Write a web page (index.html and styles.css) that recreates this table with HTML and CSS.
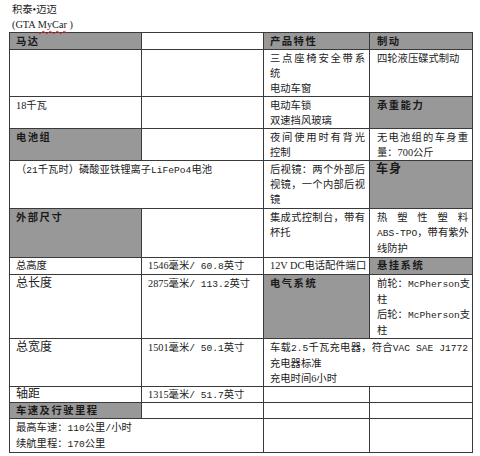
FILE: index.html
```html
<!DOCTYPE html>
<html lang="zh">
<head>
<meta charset="utf-8">
<title>积泰•迈迈</title>
<link rel="stylesheet" href="styles.css">
</head>
<body>
<div class="title">
  <div>积泰•迈迈</div>
  <div>(GTA <span class="spell">MyCar</span> )</div>
</div>
<table class="spec">
  <colgroup><col class="c1"><col class="c2"><col class="c3"><col class="c4"></colgroup>
  <tr class="r1">
    <td class="hd">马达</td><td></td><td class="hd">产品特性</td><td class="hd">制动</td>
  </tr>
  <tr>
    <td></td><td></td>
    <td><div class="jl">三点座椅安全带系</div><div>统</div><div>电动车窗</div></td>
    <td>四轮液压碟式制动</td>
  </tr>
  <tr>
    <td>18千瓦</td><td></td>
    <td><div>电动车锁</div><div>双速挡风玻璃</div></td>
    <td class="hd">承重能力</td>
  </tr>
  <tr>
    <td class="hd">电池组</td><td></td>
    <td><div class="jl">夜间使用时有背光</div><div>控制</div></td>
    <td><div class="jl">无电池组的车身重</div><div>量：700公斤</div></td>
  </tr>
  <tr class="tall">
    <td colspan="2">（<span class="m">21</span>千瓦时）磷酸亚铁锂离子<span class="m">LiFePo4</span>电池</td>
    <td><div class="jl">后视镜：两个外部后</div><div class="jl">视镜，一个内部后视</div><div>镜</div></td>
    <td class="hd big">车身</td>
  </tr>
  <tr class="tall">
    <td class="hd">外部尺寸</td><td></td>
    <td><div class="jl">集成式控制台，带有</div><div>杯托</div></td>
    <td><div class="jl">热塑性塑料</div><div class="jl"><span class="m">ABS-TPO</span>，带有紫外</div><div>线防护</div></td>
  </tr>
  <tr class="snug">
    <td>总高度</td>
    <td>1546毫米<span class="m">/ 60.8</span>英寸</td>
    <td>12V DC电话配件端口</td>
    <td class="hd">悬挂系统</td>
  </tr>
  <tr>
    <td class="lg">总长度</td>
    <td>2875毫米<span class="m">/ 113.2</span>英寸</td>
    <td class="hd">电气系统</td>
    <td><div class="jl">前轮：<span class="m">McPherson</span>支</div><div>柱</div><div class="jl">后轮：<span class="m">McPherson</span>支</div><div>柱</div></td>
  </tr>
  <tr>
    <td class="lg">总宽度</td>
    <td>1501毫米<span class="m">/ 50.1</span>英寸</td>
    <td colspan="2"><div class="jl">车载<span class="m">2.5</span>千瓦充电器，符合<span class="m">VAC SAE J1772</span></div><div>充电器标准</div><div>充电时间6小时</div></td>
  </tr>
  <tr class="tight">
    <td class="lg">轴距</td>
    <td>1315毫米<span class="m">/ 51.7</span>英寸</td>
    <td></td><td></td>
  </tr>
  <tr class="snug">
    <td class="hd">车速及行驶里程</td><td></td><td></td><td></td>
  </tr>
  <tr>
    <td colspan="2"><div>最高车速：<span class="m">110</span>公里<span class="m">/</span>小时</div><div>续航里程：<span class="m">170</span>公里</div></td>
    <td></td><td></td>
  </tr>
</table>
</body>
</html>
```

FILE: styles.css
```css
html, body {
  margin: 0;
  background: #ffffff;
}
body {
  padding: 2px 0 0 9px;
  font-family: "Liberation Serif", "Noto Sans CJK SC", serif;
  font-size: 10.3px;
  line-height: 15px;
  color: #222222;
}
.title {
  padding-left: 3px;
}
.spell {
  text-decoration: underline wavy #e03030;
  text-decoration-thickness: 1px;
  text-underline-offset: 2px;
}
.spec {
  border-collapse: collapse;
  table-layout: fixed;
  width: 463px;
}
.c1 { width: 132px; }
.c2 { width: 122px; }
.c3 { width: 106px; }
.c4 { width: 103px; }
.spec td {
  border: 1px solid #3a3a3a;
  padding: 1px 4px 0 6px;
  vertical-align: top;
  line-height: 15px;
  white-space: nowrap;
}
.spec td div {
  white-space: nowrap;
}
.spec td:nth-child(4) {
  padding-left: 7px;
}
.spec td.hd {
  background: #989898;
  font-weight: bold;
  letter-spacing: 1.5px;
  color: #1a1a1a;
}
.spec td.big {
  font-size: 12px;
  letter-spacing: 1px;
}
.spec td.lg {
  font-size: 12px;
}
.spec .tall td {
  padding-bottom: 1px;
}
.spec .tight td {
  line-height: 13px;
}
.spec .snug td {
  line-height: 14px;
}
.m {
  font-family: "Liberation Mono", "Noto Sans CJK SC", monospace;
  font-size: 9.6px;
}
.jl {
  text-align: justify;
  text-align-last: justify;
}
```
